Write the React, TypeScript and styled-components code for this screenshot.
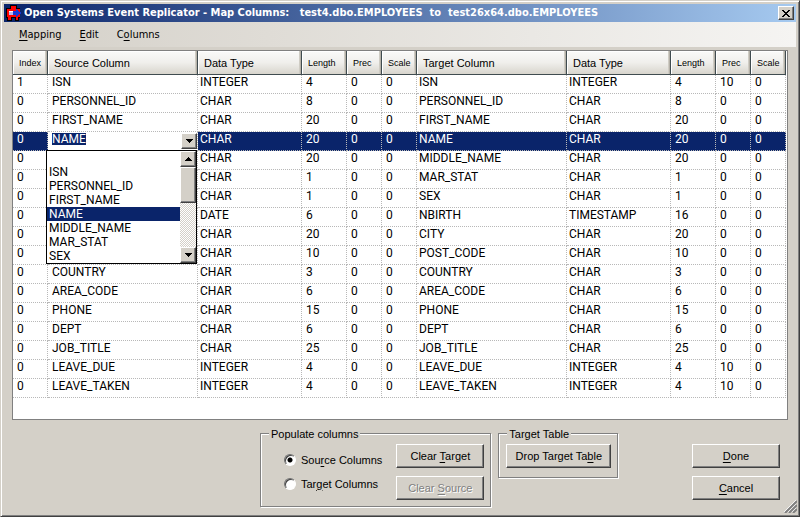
import React, { useState } from 'react';
import styled, { createGlobalStyle, css } from 'styled-components';

const face = '#d4d0c8';
const navy = '#0a246a';

const GlobalStyle = createGlobalStyle`
  * { box-sizing: border-box; }
  body {
    margin: 0;
    background: ${face};
    color: #000;
    font: 11px/14px "Liberation Sans", sans-serif;
  }
  button, input, select { font: inherit; color: inherit; }
  u { text-underline-offset: 2px; }
`;

const raised = css`
  border: 1px solid;
  border-color: #fff #404040 #404040 #fff;
  box-shadow: inset -1px -1px 0 #808080;
  background: ${face};
`;

const Window = styled.div`
  display: flex;
  flex-direction: column;
  min-height: 100vh;
  padding: 2px;
  background: ${face};
  border: 1px solid;
  border-color: ${face} #404040 #404040 ${face};
  box-shadow: inset 1px 1px 0 #fff, inset -1px -1px 0 #808080;
`;

const TitleBar = styled.header`
  display: flex;
  align-items: center;
  gap: 2px;
  height: 18px;
  margin: 1px 1px 0;
  padding: 0 2px;
  background: linear-gradient(90deg, ${navy}, #a6caf0);
`;

const Title = styled.h1`
  flex: 1;
  margin: 0;
  color: #fff;
  font: bold 11px/18px "DejaVu Sans Condensed", "DejaVu Sans", sans-serif;
  white-space: pre;
  overflow: hidden;
`;

const CloseButton = styled.button`
  ${raised}
  display: grid;
  place-items: center;
  width: 16px;
  height: 14px;
  padding: 0;
`;

const MenuBar = styled.nav`
  display: flex;
  gap: 2px;
  height: 25px;
  margin: 0 1px;
  padding: 1px 7px 0;
  background: linear-gradient(90deg, ${face}, #f5f4f2);
`;

const MenuItem = styled.button`
  padding: 0 8px;
  border: 0;
  background: none;
  font: 11px/14px "DejaVu Sans Condensed", "DejaVu Sans", sans-serif;
`;

const Grid = styled.main`
  flex: 1;
  margin: 3px 9px 0 9px;
  border: 1px solid #808080;
  background: #fff;
`;

const Table = styled.table`
  table-layout: fixed;
  width: 773px;
  border-collapse: separate;
  border-spacing: 0;
`;

const Col = styled.col<{ $w: number }>`
  width: ${p => p.$w}px;
`;

const Head = styled.th<{ $small?: boolean }>`
  height: 24px;
  padding: 1px 0 0 6px;
  border-right: 1px solid #404c50;
  border-bottom: 1px solid #404c50;
  background: linear-gradient(#fafaf9, #f0efec 50%, #d8d5cd);
  box-shadow: inset -1px 0 0 #b5b1a8, inset -2px 0 0 #cfccc4, inset 1px 1px 0 #fff;
  font-weight: 400;
  font-size: ${p => (p.$small ? 9 : 11)}px;
  text-align: left;
  white-space: nowrap;
`;

const Row = styled.tr<{ $selected?: boolean }>`
  background: ${p => (p.$selected ? navy : '#fff')};
  color: ${p => (p.$selected ? '#fff' : '#000')};
`;

const Cell = styled.td<{ $pad?: number }>`
  height: 19px;
  padding: 0 0 4px ${p => p.$pad ?? 4}px;
  border-right: 1px dotted #b8b8b8;
  border-bottom: 1px dotted #b8b8b8;
  font: 12px/14px Roboto, "Liberation Sans", sans-serif;
  white-space: nowrap;
`;

const EditCell = styled(Cell)`
  position: relative;
  padding: 0;
  background: #fff;
`;

const Combo = styled.div`
  display: flex;
  justify-content: space-between;
  height: 18px;
  padding: 1px 0 0 4px;
`;

const ComboInput = styled.input`
  field-sizing: content;
  height: 12px;
  padding: 0;
  border: 0;
  outline: 0;
  line-height: 12px;
  background: ${navy};
  color: #fff;
`;

const ArrowButton = styled.button`
  ${raised}
  display: grid;
  place-items: center;
  width: 16px;
  height: 16px;
  padding: 0;
`;

const Popup = styled.div`
  position: absolute;
  z-index: 1;
  top: 18px;
  left: -2px;
  display: flex;
  width: 151px;
  border: 1px solid #000;
  background: #fff;
`;

const List = styled.select`
  flex: 1;
  height: 112px;
  padding: 0;
  border: 0;
  border-radius: 0;
  outline: 0;
  overflow: hidden;
  scrollbar-width: none;
  background: #fff;
  color: #000;

  option {
    height: 14px;
    min-height: 14px;
    padding: 0 2px;
    line-height: 14px;
  }
  option:checked {
    background: linear-gradient(${navy}, ${navy});
    -webkit-text-fill-color: #fff;
  }
`;

const ScrollBar = styled.div`
  display: flex;
  flex-direction: column;
  width: 16px;
  background: repeating-conic-gradient(#fff 0 25%, ${face} 0 50%) 0 0 / 2px 2px;
`;

const Thumb = styled.div`
  ${raised}
  height: 36px;
  margin-bottom: auto;
`;

const Footer = styled.footer`
  display: flex;
  align-items: flex-start;
  gap: 7px;
  padding: 5px 17px 7px 257px;
`;

const Group = styled.fieldset<{ $roomy?: boolean }>`
  display: flex;
  gap: 14px;
  margin: 0;
  padding: 3px 6px ${p => (p.$roomy ? 9 : 6)}px 7px;
  border: 1px solid #808080;
  box-shadow: inset 1px 1px 0 #fff, 1px 1px 0 #fff;
`;

const Legend = styled.legend`
  margin-left: 1px;
  padding: 2px 2px 0;
  background: ${face};
  line-height: 14px;
`;

const Stack = styled.div`
  display: flex;
  flex-direction: column;
  gap: 8px;
`;

const Actions = styled(Stack)`
  margin: 19px 0 0 auto;
`;

const Radios = styled(Stack)`
  gap: 0;
  padding-left: 16px;
`;

const RadioLabel = styled.label`
  display: flex;
  align-items: center;
  gap: 5px;
  height: 24px;
  padding-top: 7px;
  white-space: nowrap;
`;

const Radio = styled.input`
  appearance: none;
  width: 12px;
  height: 12px;
  margin: 0;
  border: 1px solid;
  border-color: #707070 #fff #fff #707070;
  border-radius: 50%;
  background: #fff;
  box-shadow: inset 1px 1px 0 #404040;

  &:checked {
    background: radial-gradient(circle, #000 2px, #fff 3px);
  }
`;

const Button = styled.button<{ $wide?: boolean }>`
  ${raised}
  width: ${p => (p.$wide ? 105 : 88)}px;
  height: 24px;
  padding: 0;
  white-space: nowrap;

  &:disabled {
    color: #808080;
    text-shadow: 1px 1px 0 #fff;
  }
`;

const Grip = styled.svg`
  position: absolute;
  right: 3px;
  bottom: 4px;
`;

const Arrow = ({ up = false }: { up?: boolean }) => (
  <svg width="7" height="4" viewBox="0 0 7 4" shapeRendering="crispEdges" aria-hidden="true">
    <path d={up ? 'M3 0h1v1h1v1h1v1h1v1H0V3h1V2h1V1h1z' : 'M0 0h7v1H6v1H5v1H4v1H3V3H2V2H1V1H0z'} />
  </svg>
);

const AppIcon = () => (
  <svg width="16" height="16" viewBox="0 0 16 16" shapeRendering="crispEdges" aria-hidden="true">
    <path fill="#000" d="M4 0h7v3h3v10h-1v3H9v-3H6v3H1v-3H0V3h4z" />
    <path fill="#f00" d="M5 1h5v3h4v8h-2v3h-2v-3H5v3H2v-3H1V4h4z" />
    <path fill="#b8b8f0" d="M3 6h6v4H3z" />
    <path fill="#fff" d="M3 6h4v1H3z" />
    <path fill="#1838d8" d="M10 4h1v1h1v1h1v1h2v2h-2v1h-1v1h-1v1h-1v-2H7V6h3z" />
  </svg>
);

const widths = [35, 150, 104, 45, 35, 35, 150, 104, 45, 35, 35];
const heads = ['Index', 'Source Column', 'Data Type', 'Length', 'Prec', 'Scale', 'Target Column', 'Data Type', 'Length', 'Prec', 'Scale'];

type Line = { source: string; type: string; length: number; target?: string; targetType?: string; targetLength?: number; prec?: number };

const lines: Line[] = [
  { source: 'ISN', type: 'INTEGER', length: 4, prec: 10 },
  { source: 'PERSONNEL_ID', type: 'CHAR', length: 8 },
  { source: 'FIRST_NAME', type: 'CHAR', length: 20 },
  { source: 'NAME', type: 'CHAR', length: 20 },
  { source: 'MIDDLE_NAME', type: 'CHAR', length: 20 },
  { source: 'MAR_STAT', type: 'CHAR', length: 1 },
  { source: 'SEX', type: 'CHAR', length: 1 },
  { source: '', type: 'DATE', length: 6, target: 'NBIRTH', targetType: 'TIMESTAMP', targetLength: 16 },
  { source: 'CITY', type: 'CHAR', length: 20 },
  { source: 'POST_CODE', type: 'CHAR', length: 10 },
  { source: 'COUNTRY', type: 'CHAR', length: 3 },
  { source: 'AREA_CODE', type: 'CHAR', length: 6 },
  { source: 'PHONE', type: 'CHAR', length: 15 },
  { source: 'DEPT', type: 'CHAR', length: 6 },
  { source: 'JOB_TITLE', type: 'CHAR', length: 25 },
  { source: 'LEAVE_DUE', type: 'INTEGER', length: 4, prec: 10 },
  { source: 'LEAVE_TAKEN', type: 'INTEGER', length: 4, prec: 10 },
];

const options = ['', 'ISN', 'PERSONNEL_ID', 'FIRST_NAME', 'NAME', 'MIDDLE_NAME', 'MAR_STAT', 'SEX'];

function ColumnPicker() {
  const [value, setValue] = useState('NAME');
  return (
    <EditCell>
      <Combo>
        <ComboInput aria-label="Source column" value={value} onChange={e => setValue(e.target.value)} />
        <ArrowButton aria-label="Open list"><Arrow /></ArrowButton>
      </Combo>
      <Popup>
        <List size={8} aria-label="Source column choices" value={value} onChange={e => setValue(e.target.value)}>
          {options.map(o => <option key={o} value={o}>{o}</option>)}
        </List>
        <ScrollBar>
          <ArrowButton aria-label="Scroll up"><Arrow up /></ArrowButton>
          <Thumb />
          <ArrowButton aria-label="Scroll down"><Arrow /></ArrowButton>
        </ScrollBar>
      </Popup>
    </EditCell>
  );
}

export default function App() {
  const [side, setSide] = useState('source');
  return (
    <>
      <GlobalStyle />
      <Window>
        <TitleBar>
          <AppIcon />
          <Title>{'Open Systems Event Replicator - Map Columns:   test4.dbo.EMPLOYEES  to  test26x64.dbo.EMPLOYEES'}</Title>
          <CloseButton aria-label="Close">
            <svg width="8" height="7" viewBox="0 0 8 7" shapeRendering="crispEdges" aria-hidden="true">
              <path d="M0 0h2v1h1v1h2V1h1V0h2v1H7v1H6v1H5v1h1v1h1v1h1v1H6V6H5V5H3v1H2v1H0V6h1V5h1V4h1V3H2V2H1V1H0z" />
            </svg>
          </CloseButton>
        </TitleBar>
        <MenuBar>
          <MenuItem><u>M</u>apping</MenuItem>
          <MenuItem><u>E</u>dit</MenuItem>
          <MenuItem>C<u>o</u>lumns</MenuItem>
        </MenuBar>
        <Grid>
          <Table>
            <colgroup>{widths.map((w, i) => <Col key={i} $w={w} />)}</colgroup>
            <thead>
              <tr>{heads.map((h, i) => <Head key={i} scope="col" $small={!/(Column|Type)$/.test(h)}>{h}</Head>)}</tr>
            </thead>
            <tbody>
              {lines.map((r, i) => (
                <Row key={i} $selected={i === 3}>
                  <Cell>{i === 0 ? 1 : 0}</Cell>
                  {i === 3 ? <ColumnPicker /> : <Cell>{r.source}</Cell>}
                  <Cell $pad={2}>{r.type}</Cell>
                  <Cell>{r.length}</Cell>
                  <Cell>0</Cell>
                  <Cell>0</Cell>
                  <Cell $pad={2}>{r.target ?? r.source}</Cell>
                  <Cell $pad={2}>{r.targetType ?? r.type}</Cell>
                  <Cell>{r.targetLength ?? r.length}</Cell>
                  <Cell>{r.prec ?? 0}</Cell>
                  <Cell>0</Cell>
                </Row>
              ))}
            </tbody>
          </Table>
        </Grid>
        <Footer>
          <Group>
            <Legend>Populate columns</Legend>
            <Radios>
              <RadioLabel>
                <Radio type="radio" name="side" checked={side === 'source'} onChange={() => setSide('source')} />
                <span>Sou<u>r</u>ce Columns</span>
              </RadioLabel>
              <RadioLabel>
                <Radio type="radio" name="side" checked={side === 'target'} onChange={() => setSide('target')} />
                <span>Tar<u>g</u>et Columns</span>
              </RadioLabel>
            </Radios>
            <Stack>
              <Button>Clear <u>T</u>arget</Button>
              <Button disabled>Clear <u>S</u>ource</Button>
            </Stack>
          </Group>
          <Group $roomy>
            <Legend>Target Table</Legend>
            <Button $wide>Drop Target Ta<u>b</u>le</Button>
          </Group>
          <Actions>
            <Button><u>D</u>one</Button>
            <Button><u>C</u>ancel</Button>
          </Actions>
        </Footer>
        <Grip width="13" height="13" viewBox="0 0 13 13" aria-hidden="true">
          <path stroke="#fff" d="M0 12L12 0M4 12L12 4M8 12L12 8" />
          <path stroke="#808080" strokeWidth="2" d="M1 13L13 1M5 13L13 5M9 13L13 9" />
        </Grip>
      </Window>
    </>
  );
}
